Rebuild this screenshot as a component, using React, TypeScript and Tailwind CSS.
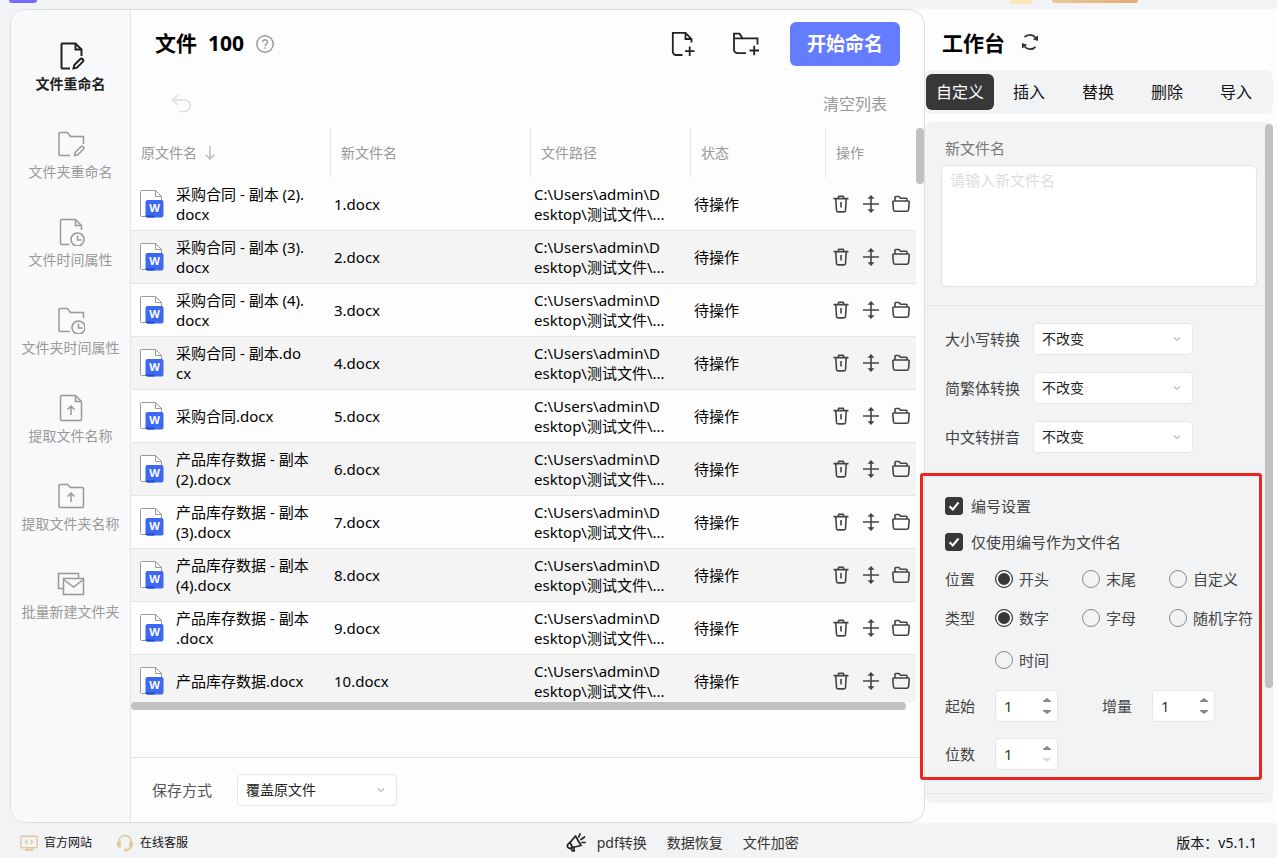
import { useState } from 'react'
import type { ReactNode } from 'react'

interface FileRow {
  name: string
  newName: string
}

const FILES: FileRow[] = [
  { name: '采购合同 - 副本 (2).\ndocx', newName: '1.docx' },
  { name: '采购合同 - 副本 (3).\ndocx', newName: '2.docx' },
  { name: '采购合同 - 副本 (4).\ndocx', newName: '3.docx' },
  { name: '采购合同 - 副本.do\ncx', newName: '4.docx' },
  { name: '采购合同.docx', newName: '5.docx' },
  { name: '产品库存数据 - 副本\n(2).docx', newName: '6.docx' },
  { name: '产品库存数据 - 副本\n(3).docx', newName: '7.docx' },
  { name: '产品库存数据 - 副本\n(4).docx', newName: '8.docx' },
  { name: '产品库存数据 - 副本\n.docx', newName: '9.docx' },
  { name: '产品库存数据.docx', newName: '10.docx' },
]

const FILE_PATH = 'C:\\Users\\admin\\D\nesktop\\测试文件\\...'

const FILE_FOLD = 'M18.5 1.5V7.5H24.5'
const PENCIL = 'M16.5 26.5l.8-3.4 5.8-5.8a1.8 1.8 0 0 1 2.6 2.6l-5.8 5.8z'

const NAV: { label: string; icon: ReactNode }[] = [
  {
    label: '文件重命名',
    icon: (
      <>
        <path d="M13 26.5H5.5a1 1 0 0 1-1-1V2.5a1 1 0 0 1 1-1H18.5L24.5 7.5V14" />
        <path d={FILE_FOLD} />
        <path d={PENCIL} />
      </>
    ),
  },
  {
    label: '文件夹重命名',
    icon: (
      <>
        <path d="M13 25.5H3a1 1 0 0 1-1-1V3.5a1 1 0 0 1 1-1H10.5L13.5 6.5H26.5V14" />
        <path d="M17.5 25.5l.8-3.2 5.6-5.6a1.7 1.7 0 0 1 2.5 2.5l-5.6 5.6z" />
      </>
    ),
  },
  {
    label: '文件时间属性',
    icon: (
      <>
        <path d="M12 26.5H4.5a1 1 0 0 1-1-1V2.5a1 1 0 0 1 1-1H18.5L24.5 7.5V12" />
        <path d={FILE_FOLD} />
        <circle cx="20.5" cy="21.5" r="6.5" />
        <path d="M20.5 17.5v4.5h4" />
      </>
    ),
  },
  {
    label: '文件夹时间属性',
    icon: (
      <>
        <path d="M13 25.5H3a1 1 0 0 1-1-1V3.5a1 1 0 0 1 1-1H10.5L13.5 6.5H26.5V12" />
        <circle cx="21.5" cy="21.5" r="6.5" />
        <path d="M21.5 17.5v4.5h4" />
      </>
    ),
  },
  {
    label: '提取文件名称',
    icon: (
      <>
        <path d="M4.5 1.5H18.5L24.5 7.5V25.5a1 1 0 0 1-1 1H4.5a1 1 0 0 1-1-1V2.5a1 1 0 0 1 1-1Z" />
        <path d={FILE_FOLD} />
        <path d="M14 21V12M10.5 15.5L14 12l3.5 3.5" />
      </>
    ),
  },
  {
    label: '提取文件夹名称',
    icon: (
      <>
        <path d="M3 2.5H10.5L13.5 5.5H25.5a1 1 0 0 1 1 1V24.5a1 1 0 0 1-1 1H3a1 1 0 0 1-1-1V3.5a1 1 0 0 1 1-1Z" />
        <path d="M14 20V11M10.5 14.5L14 11l3.5 3.5" />
      </>
    ),
  },
  {
    label: '批量新建文件夹',
    icon: (
      <>
        <path d="M6 18.5H1.5V3.5H21.5V8" />
        <path d="M6.5 8.5H26.5V24.5H6.5Z" />
        <path d="M6.5 9.5L16.5 17L26.5 9.5" />
      </>
    ),
  },
]

const TABS = ['自定义', '插入', '替换', '删除', '导入']
const CONVERSIONS = ['大小写转换', '简繁体转换', '中文转拼音']

function WordIcon() {
  return (
    <svg className="h-[30px] w-[26px] shrink-0" viewBox="0 0 26 30" fill="none">
      <path
        d="M2.500 1.500H16.500L22.500 7.500V27.500H2.500a1 1 0 0 1-1-1V2.500a1 1 0 0 1 1-1Z"
        fill="#fff"
        stroke="#999"
      />
      <path d="M16.500 1.500V7.500H22.500" stroke="#999" />
      <rect x="6.500" y="11" width="18" height="17.500" rx="2" fill="#3d68f2" />
      <path d="M6.500 26.500h9v2h-7a2 2 0 0 1-2-2Z" fill="#1b4bd6" />
      <text
        x="15.500"
        y="23"
        textAnchor="middle"
        fill="#fff"
        className="text-[11px] font-bold"
      >
        W
      </text>
    </svg>
  )
}

function RowActions() {
  return (
    <div className="flex items-center gap-[10px] pl-[5px] text-[#444]">
      <button aria-label="删除">
        <svg className="size-5" viewBox="0 0 20 20" fill="none" stroke="currentColor" strokeWidth="1.600">
          <path d="M2.500 4.600h15M7 4.500l.8-2.300h4.400l.8 2.300M4.800 5l.7 11.500a1.500 1.500 0 0 0 1.500 1.400h6a1.500 1.500 0 0 0 1.500-1.400L15.200 5M10 8v5.500" />
        </svg>
      </button>
      <button aria-label="移动">
        <svg className="size-5" viewBox="0 0 20 20" fill="none" stroke="currentColor" strokeWidth="1.600">
          <path d="M2 10h16M10 3v14" />
          <path d="M10 1l3.500 3.800h-7ZM10 19l3.500-3.800h-7Z" fill="currentColor" stroke="none" />
        </svg>
      </button>
      <button aria-label="打开文件夹">
        <svg className="size-5" viewBox="0 0 20 20" fill="none" stroke="currentColor" strokeWidth="1.600" strokeLinejoin="round">
          <path d="M4 7V3.300a.8.8 0 0 1 .8-.8h3.200l1.500 1.800h5.700a.8.8 0 0 1 .8.8V7" />
          <path d="M2.800 7h14.400a1 1 0 0 1 1 1.100l-.6 7.400a2 2 0 0 1-2 1.800H4.400a2 2 0 0 1-2-1.800l-.6-7.400a1 1 0 0 1 1-1.100Z" />
        </svg>
      </button>
    </div>
  )
}

function SelectBox({ id, value }: { id: string; value: string }) {
  return (
    <div className="relative w-40 shrink-0">
      <select
        id={id}
        className="block h-8 w-full appearance-none rounded border border-[#e4e6e8] bg-white pl-2 pr-6 text-sm text-[#222]"
      >
        <option>{value}</option>
      </select>
      <svg
        className="pointer-events-none absolute right-3 top-3 size-2"
        viewBox="0 0 8 8"
        fill="none"
        stroke="#bbb"
        strokeWidth="1.200"
      >
        <path d="M1 2.500L4 5.500L7 2.500" />
      </svg>
    </div>
  )
}

function CheckItem({ label }: { label: string }) {
  const [checked, setChecked] = useState(true)
  return (
    <label className="flex h-5 items-center gap-2">
      <span className="relative size-[18px]">
        <input
          type="checkbox"
          checked={checked}
          onChange={(e) => setChecked(e.target.checked)}
          className="block size-[18px] appearance-none rounded-[3px] border border-[#383838] checked:bg-[#383838]"
        />
        <svg
          className="pointer-events-none absolute inset-0 size-[18px]"
          viewBox="0 0 18 18"
          fill="none"
          stroke="#fff"
          strokeWidth="2"
        >
          {checked && <path d="M4.500 9.200L7.800 12.500L13.500 5.500" />}
        </svg>
      </span>
      {label}
    </label>
  )
}

function RadioItem({ name, label, checked }: { name: string; label: string; checked?: boolean }) {
  return (
    <label className="flex h-5 w-[87px] items-center gap-[6px] whitespace-nowrap">
      <input
        type="radio"
        name={name}
        defaultChecked={checked}
        className="size-[18px] shrink-0 appearance-none rounded-full border border-[#888] checked:border-[#383838] checked:bg-[#383838] checked:shadow-[inset_0_0_0_2px_#f1f3f5]"
      />
      {label}
    </label>
  )
}

function NumberBox({ id, atMin }: { id: string; atMin?: boolean }) {
  const [value, setValue] = useState(1)
  return (
    <div className="flex h-8 w-[63px] items-center rounded border border-[#e4e6e8] bg-white pr-[6px]">
      <input
        id={id}
        value={value}
        onChange={(e) => setValue(Number(e.target.value) || 1)}
        className="w-full min-w-0 bg-transparent pl-2 text-[#333] outline-none"
      />
      <div className="flex flex-col gap-2 text-[#888]">
        <button aria-label="增加" onClick={() => setValue(value + 1)}>
          <svg className="h-1 w-2" viewBox="0 0 8 4" fill="currentColor">
            <path d="M4 0L8 3V4H0V3Z" />
          </svg>
        </button>
        <button
          aria-label="减少"
          className={atMin ? 'text-[#ddd]' : ''}
          onClick={() => setValue(Math.max(1, value - 1))}
        >
          <svg className="h-1 w-2" viewBox="0 0 8 4" fill="currentColor">
            <path d="M0 0H8V1L4 4L0 1Z" />
          </svg>
        </button>
      </div>
    </div>
  )
}

function Sidebar() {
  return (
    <nav className="flex w-[120px] shrink-0 flex-col gap-9 border-r border-[#e2e4e6] bg-[#f8f9fb] pt-8">
      {NAV.map((item, i) => (
        <button
          key={item.label}
          className={`flex flex-col items-center gap-1 text-sm/5 whitespace-nowrap ${i === 0 ? 'font-bold text-[#222]' : 'text-[#999]'}`}
        >
          <svg
            className="size-7"
            viewBox="0 0 28 28"
            fill="none"
            stroke="currentColor"
            strokeWidth={i === 0 ? 2 : 1.5}
          >
            {item.icon}
          </svg>
          {item.label}
        </button>
      ))}
    </nav>
  )
}

function FileTable() {
  const th = 'h-[50px] pl-[10px] text-left font-normal border-r border-[#e6e6e6]'
  const td = 'h-[53px] border-b border-[#e6e6e6] pl-[3px]'
  return (
    <div className="flex min-h-0 flex-1 items-start">
      <div className="flex h-full min-w-0 flex-1 flex-col">
        <div className="min-h-0 flex-1 overflow-hidden">
          <table className="w-full table-fixed border-separate border-spacing-0 text-[15px]/5">
            <colgroup>
              <col className="w-[200px]" />
              <col />
              <col className="w-40" />
              <col className="w-[135px]" />
              <col className="w-[90px]" />
            </colgroup>
            <thead className="text-sm text-[#999]">
              <tr>
                <th className={th}>
                  <span className="flex items-center gap-2">
                    原文件名
                    <svg className="h-[14px] w-[10px]" viewBox="0 0 10 14" fill="none" stroke="#bbb" strokeWidth="1.500">
                      <path d="M5 0V13M.8 8.800L5 13L9.200 8.800" />
                    </svg>
                  </span>
                </th>
                <th className={th}>新文件名</th>
                <th className={th}>文件路径</th>
                <th className={th}>状态</th>
                <th className="h-[50px] pl-[10px] text-left font-normal">操作</th>
              </tr>
            </thead>
            <tbody>
              {FILES.map((file) => (
                <tr key={file.newName} className="even:bg-[#f4f4f4]">
                  <td className="h-[53px] border-b border-[#e6e6e6] pl-2">
                    <div className="flex items-center gap-[11px]">
                      <WordIcon />
                      <span className="whitespace-pre">{file.name}</span>
                    </div>
                  </td>
                  <td className={td}>{file.newName}</td>
                  <td className={td}>
                    <span className="whitespace-pre">{FILE_PATH}</span>
                  </td>
                  <td className={td}>待操作</td>
                  <td className="h-[53px] border-b border-[#e6e6e6]">
                    <RowActions />
                  </td>
                </tr>
              ))}
            </tbody>
          </table>
        </div>
        <div className="mr-[10px] h-2 shrink-0 rounded-full bg-[#c1c1c1]" />
      </div>
      <div className="h-14 w-2 rounded-full bg-[#c1c1c1]" />
    </div>
  )
}

function FilePanel() {
  return (
    <section className="flex min-w-0 flex-1 flex-col">
      <header className="flex items-center px-6 pt-3">
        <h1 className="text-[21px] font-bold">文件&nbsp; 100</h1>
        <svg className="ml-3 size-[18px]" viewBox="0 0 18 18" fill="none" stroke="#999" strokeWidth="1.400">
          <circle cx="9" cy="9" r="8.200" />
          <path d="M6.600 7.200a2.400 2.400 0 1 1 3.600 2.100c-.8.500-1.200.9-1.200 1.800" />
          <path d="M9 12.300v1.500" />
        </svg>
        <button aria-label="添加文件" className="ml-auto">
          <svg className="size-7" viewBox="0 0 28 28" fill="none" stroke="#222" strokeWidth="1.800">
            <path d="M12.500 25H6a3.200 3.200 0 0 1-3.200-3.200V2.800H15.500L21.500 9V12.500" />
            <path d="M15.500 2.800V9H21.500M15 21.200h9.500M19.700 16.500v9.500" />
          </svg>
        </button>
        <button aria-label="添加文件夹" className="ml-[34px]">
          <svg className="size-7" viewBox="0 0 28 28" fill="none" stroke="#222" strokeWidth="1.800">
            <path d="M14 23.200H5.500a3.500 3.500 0 0 1-3.500-3.500V3.700H7.500L10.500 8.300H25.500V14.500" />
            <path d="M2.500 8.300H10.500M17.500 20.500h9.500M22.200 15.800v9.500" />
          </svg>
        </button>
        <button className="ml-[30px] h-11 w-[110px] rounded-md bg-[#647cff] text-[19px] font-bold text-white">
          开始命名
        </button>
      </header>

      <div className="mt-[14px] flex h-12 items-center justify-between pl-10 pr-[37px]">
        <button aria-label="撤销">
          <svg className="size-5" viewBox="0 0 20 20" fill="none" stroke="#ddd" strokeWidth="1.500">
            <path d="M7 1L1.500 6L7 11M1.500 6H13.500a5.500 5.500 0 0 1 0 11.500H8.500" />
          </svg>
        </button>
        <button className="text-base text-[#999]">清空列表</button>
      </div>

      <FileTable />

      <footer className="mt-[47px] flex h-[65px] shrink-0 items-center border-t border-[#e2e4e6] pl-[21px]">
        <label htmlFor="save-mode" className="mr-[25px] text-[15px] text-[#555]">
          保存方式
        </label>
        <SelectBox id="save-mode" value="覆盖原文件" />
      </footer>
    </section>
  )
}

function Workbench() {
  const [tab, setTab] = useState(TABS[0])
  return (
    <aside className="flex w-[352px] shrink-0 flex-col bg-[#fdfdfd] pb-5 pr-1">
      <div className="flex h-[61px] items-center gap-4 pl-[17px] pt-[9px]">
        <h2 className="text-[21px] font-bold">工作台</h2>
        <button aria-label="刷新">
          <svg className="-mt-1 block size-[18px]" viewBox="0 0 18 18" fill="none" stroke="#333" strokeWidth="1.800">
            <path d="M3.500 4.200A7.200 7.200 0 0 1 14.500 4.500M14.500 13.800A7.200 7.200 0 0 1 3.500 13.500" />
            <path d="M17 2.500V8L11.800 6.200ZM1 15.500V10L6.200 11.800Z" fill="#333" stroke="none" />
          </svg>
        </button>
      </div>

      <div className="flex h-11 items-center gap-px rounded-md bg-[#f1f3f5] pl-px">
        {TABS.map((t) => (
          <button
            key={t}
            onClick={() => setTab(t)}
            className={`h-9 w-[68px] rounded-md text-base ${t === tab ? 'bg-[#383838] text-white' : 'text-[#111]'}`}
          >
            {t}
          </button>
        ))}
      </div>

      <div className="mt-2 flex min-h-0 flex-1 items-start rounded-md bg-[#f1f3f5] text-[15px]/5 text-[#444]">
        <div className="min-w-0 flex-1">
          <div className="border-b border-[#e4e6e8] pb-[18px] pl-4 pr-2 pt-4">
            <label htmlFor="new-name" className="block pl-1 text-[#777]">
              新文件名
            </label>
            <textarea
              id="new-name"
              placeholder="请输入新文件名"
              className="mt-[7px] block h-[122px] w-full resize-none rounded-md border border-[#e2e4e6] bg-white px-2 py-1 placeholder:text-[#ddd]"
            />
          </div>

          <div className="flex flex-col gap-[17px] border-b border-[#e4e6e8] pb-[22px] pl-5 pt-[17px]">
            {CONVERSIONS.map((label, i) => (
              <div key={label} className="flex items-center">
                <label htmlFor={`convert-${i}`} className="w-[88px]">
                  {label}
                </label>
                <SelectBox id={`convert-${i}`} value="不改变" />
              </div>
            ))}
          </div>

          <div className="relative border-b border-[#e4e6e8] pb-[23px] pl-5 pt-5">
            <div className="pointer-events-none absolute -left-[5px] -top-[3px] bottom-[13px] right-[3px] rounded-[3px] border-3 border-[#e8281e]" />
            <div className="flex flex-col gap-4">
              <CheckItem label="编号设置" />
              <CheckItem label="仅使用编号作为文件名" />
            </div>
            <div className="mt-[17px] flex">
              <span className="w-[50px] shrink-0">位置</span>
              <RadioItem name="position" label="开头" checked />
              <RadioItem name="position" label="末尾" />
              <RadioItem name="position" label="自定义" />
            </div>
            <div className="mt-[19px] flex">
              <span className="w-[50px] shrink-0">类型</span>
              <div className="flex flex-wrap gap-y-[22px]">
                <RadioItem name="type" label="数字" checked />
                <RadioItem name="type" label="字母" />
                <RadioItem name="type" label="随机字符" />
                <RadioItem name="type" label="时间" />
              </div>
            </div>
            <div className="mt-5 flex items-center">
              <label htmlFor="start" className="w-[50px]">
                起始
              </label>
              <NumberBox id="start" />
              <label htmlFor="step" className="ml-11 w-[50px]">
                增量
              </label>
              <NumberBox id="step" />
            </div>
            <div className="mt-4 flex items-center">
              <label htmlFor="digits" className="w-[50px]">
                位数
              </label>
              <NumberBox id="digits" atMin />
            </div>
          </div>
        </div>
        <div className="mt-[2px] h-[564px] w-2 shrink-0 rounded-full bg-[#c1c1c1]" />
      </div>
    </aside>
  )
}

function StatusBar() {
  return (
    <footer className="flex h-[35px] shrink-0 items-center justify-between px-5 pt-1 text-sm text-[#111]">
      <div className="flex items-center text-xs">
        <a href="#site" className="flex items-center gap-[6px]">
          <svg className="size-[18px]" viewBox="0 0 18 18" fill="none" stroke="#e6c79c" strokeWidth="1.500">
            <rect x=".8" y="2.300" width="16.400" height="11.500" rx="1.200" />
            <path d="M7.500 6L5.500 8L7.500 10M10.500 6L12.500 8L10.500 10" strokeWidth="1.200" />
            <path d="M5 15.800h8" strokeWidth="2.200" />
          </svg>
          官方网站
        </a>
        <a href="#support" className="ml-6 flex items-center gap-[6px]">
          <svg className="size-[18px]" viewBox="0 0 18 18" fill="none" stroke="#e6c79c" strokeWidth="1.500">
            <path d="M2.500 8.500a6.500 7 0 0 1 13 0M15 12.500a5 5 0 0 1-4.500 3.500" />
            <path d="M4 8v5a2.500 2.500 0 0 1 0-5ZM14 8v5a2.500 2.500 0 0 0 0-5Z" fill="#e6c79c" />
            <circle cx="9.800" cy="16.200" r="1" fill="#e6c79c" />
          </svg>
          在线客服
        </a>
      </div>
      <div className="flex items-center gap-5 text-[#333]">
        <a href="#pdf" className="flex items-center gap-[11px]">
          <svg className="size-5" viewBox="0 0 20 20" fill="none" stroke="#222" strokeWidth="1.700" strokeLinejoin="round" strokeLinecap="round">
            <path d="M4 9.500L9.500 3L15 12.500L6.500 14.500Z" />
            <path d="M4 9.500C1.500 11 .8 12.500 1.800 14.200C2.800 15.700 4.500 15.500 6.500 14.500M5 15.500L6.500 18H8.200L7.800 14.500" />
            <path d="M12.800 4L14 1M15 6.500L18.500 4M16 9.500H19.200" />
          </svg>
          pdf转换
        </a>
        <a href="#recover">数据恢复</a>
        <a href="#encrypt">文件加密</a>
      </div>
      <span>版本：v5.1.1</span>
    </footer>
  )
}

export default function App() {
  return (
    <div className="flex h-screen flex-col overflow-hidden bg-[#f1f3f5] font-['Noto_Sans','Noto_Sans_CJK_SC',sans-serif] text-black">
      <div className="flex h-[9px] shrink-0 items-start pl-[9px] pr-[139px]">
        <div className="h-[3px] w-7 rounded-b bg-[#766cfb]" />
        <div className="ml-auto h-1 w-6 rounded-b-full bg-[#fde6b8]" />
        <div className="ml-[19px] h-[3px] w-[86px] rounded-b bg-linear-to-r from-[#eac89c] to-[#e0ae6e]" />
      </div>

      <main className="flex min-h-0 flex-1">
        {/* the card's right corners sit on the workbench background */}
        <div className="flex min-w-0 flex-1 bg-[linear-gradient(to_right,#f1f3f5_50%,#fdfdfd_50%)] pl-[10px]">
          <div className="flex min-w-0 flex-1 overflow-hidden rounded-2xl border border-[#dcdfe1] bg-[#fdfdfd]">
            <Sidebar />
            <FilePanel />
          </div>
        </div>
        <Workbench />
      </main>

      <StatusBar />
    </div>
  )
}
